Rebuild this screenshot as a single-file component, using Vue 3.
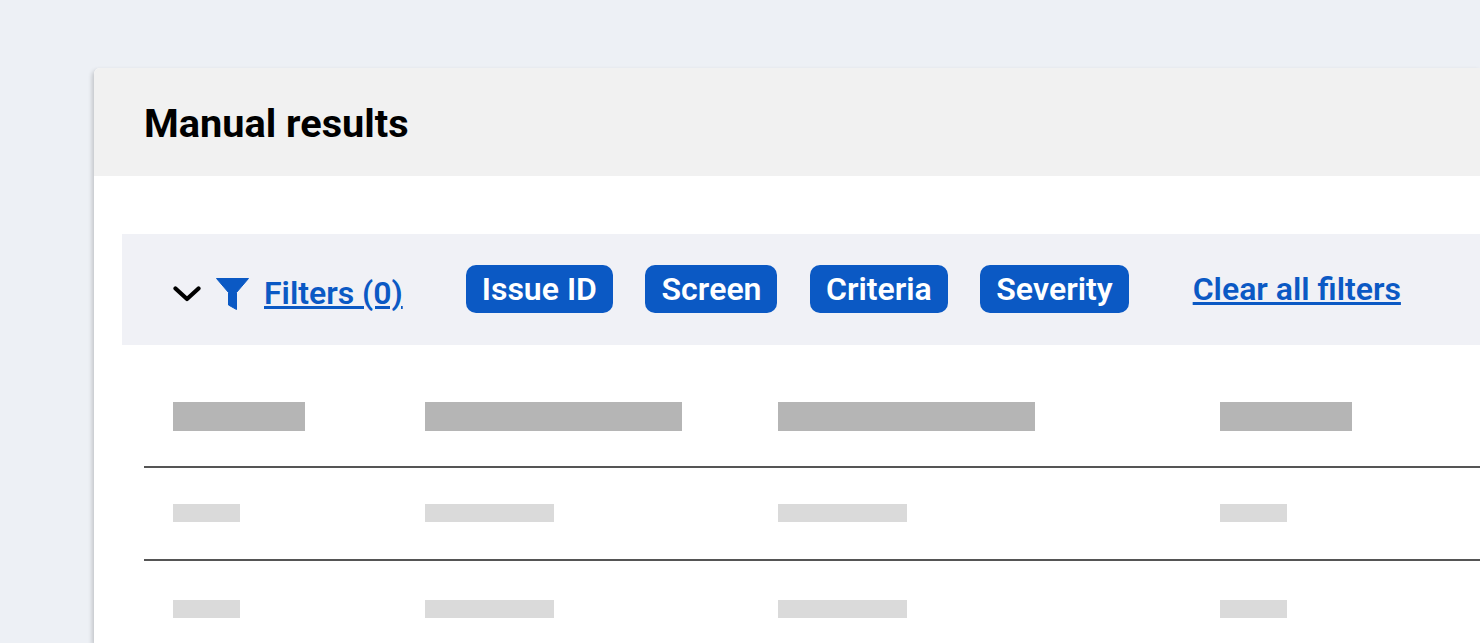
<script setup>
const tags = ['Issue ID', 'Screen', 'Criteria', 'Severity']
const rows = [1, 2]
</script>

<template>
  <div class="page">
    <section class="card">
      <header class="card-head">
        <h1>Manual results</h1>
      </header>
      <div class="card-body">
        <div class="filters">
          <div class="toggle">
            <svg class="chevron" width="28" height="16" viewBox="0 0 28 16">
              <path d="M2.5 2.5 14 13 25.5 2.5" fill="none" stroke="#000" stroke-width="4.2" stroke-linecap="round" stroke-linejoin="round" />
            </svg>
            <svg class="funnel" width="33" height="32" viewBox="0 0 33 32">
              <path d="M0.5 0.5H32.5L20.5 14.5V31.5L12.5 27V14.5Z" fill="#0b59c4" stroke="#0b59c4" stroke-linejoin="round" />
            </svg>
            <a class="link" href="#">Filters (0)</a>
          </div>
          <div class="tags">
            <span v-for="tag in tags" :key="tag" class="tag">{{ tag }}</span>
          </div>
          <a class="link clear" href="#">Clear all filters</a>
        </div>

        <div class="table">
          <div class="row head">
            <div class="cell"><i class="bar b1"></i></div>
            <div class="cell"><i class="bar b2"></i></div>
            <div class="cell"><i class="bar b2"></i></div>
            <div class="cell"><i class="bar b1"></i></div>
          </div>
          <div v-for="r in rows" :key="r" class="row item">
            <div class="cell"><i class="line l1"></i></div>
            <div class="cell"><i class="line l2"></i></div>
            <div class="cell"><i class="line l2"></i></div>
            <div class="cell"><i class="line l1"></i></div>
          </div>
        </div>
      </div>
    </section>
  </div>
</template>

<style scoped>
.page {
  height: 643px;
  box-sizing: border-box;
  padding: 68px 0 0 94px;
  background: #edf0f5;
  overflow: hidden;
  font-family: Roboto, "Liberation Sans", sans-serif;
}

.card {
  height: 100%;
  background: #fff;
  border-top-left-radius: 6px;
  box-shadow: -2px 2px 4px rgba(0, 0, 0, 0.18);
}

.card-head {
  height: 108px;
  display: flex;
  align-items: center;
  padding-left: 50px;
  background: #f1f1f1;
  border-top-left-radius: 6px;
}

h1 {
  margin: 0 0 -3px;
  font-size: 39.7px;
  font-weight: 700;
  color: #000;
}

.card-body {
  padding: 58px 0 0 28px;
}

.filters {
  height: 111px;
  display: flex;
  align-items: center;
  padding-left: 51px;
  background: #f0f1f6;
}

.toggle {
  display: flex;
  align-items: center;
  margin-top: 8px;
}

.chevron {
  margin-right: 15px;
}

.funnel {
  margin-right: 15px;
}

.link {
  margin-bottom: 2px;
  font-size: 32px;
  font-weight: 600;
  color: #0b59c4;
  text-decoration: underline;
}

.tags {
  display: flex;
  gap: 32.5px;
  margin: 0 0 1px 63px;
}

.tag {
  height: 48px;
  line-height: 48px;
  padding: 0 16px;
  border-radius: 10px;
  background: #0b59c4;
  color: #fff;
  font-size: 32px;
  font-weight: 600;
  font-kerning: none;
}

.clear {
  margin-left: 64px;
}

.table {
  margin-left: 22px;
}

.row {
  display: grid;
  grid-template-columns: 281px 353px 442px 1fr;
}

.cell {
  padding-left: 29px;
}

.cell + .cell {
  padding-left: 0;
}

.head {
  height: 123px;
  padding-top: 57px;
  box-sizing: border-box;
  border-bottom: 2px solid #555;
}

.item {
  height: 93px;
  padding-top: 36px;
  box-sizing: border-box;
  border-bottom: 2px solid #555;
}

.item + .item {
  padding-top: 39px;
}

.bar,
.line {
  display: block;
}

.bar {
  height: 29px;
  background: #b5b5b5;
}

.line {
  height: 18px;
  background: #dadada;
}

.b1 { width: 132px; }
.b2 { width: 257px; }
.l1 { width: 67px; }
.l2 { width: 129px; }
</style>
